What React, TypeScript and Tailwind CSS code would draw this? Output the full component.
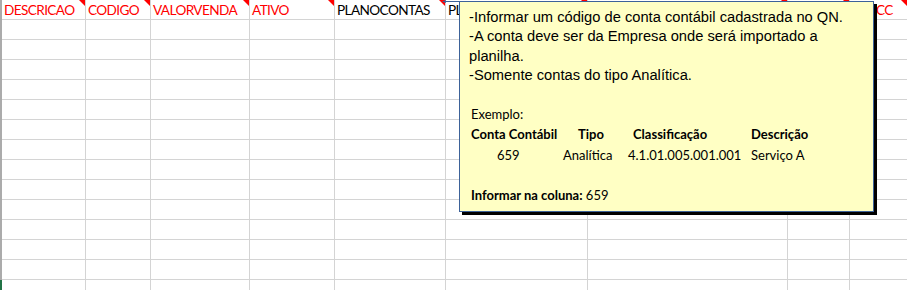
import React from 'react';

const cols = [
  { label: 'DESCRICAO', red: true },
  { label: 'CODIGO', red: true },
  { label: 'VALORVENDA', red: true },
  { label: 'ATIVO', red: true },
  { label: 'PLANOCONTAS', red: false },
  { label: 'PL', red: false },
  { label: '', red: true },
  { label: '', red: true },
  { label: 'CC', red: true },
];

const colWidth = ['w-[84px]', 'w-[65px]', 'w-[99px]', 'w-[85px]', 'w-[111px]', 'w-[142px]', 'w-[200px]', 'w-[62px]', 'w-[58px]'];

const Triangle = () => (
  <span className="absolute right-0 top-0 h-0 w-0 border-l-[6px] border-t-[6px] border-l-transparent border-t-[#ff0000]" />
);

const HeaderCell = ({ i }: { i: number }) => {
  const c = cols[i];
  return (
    <div className={`relative h-[20px] shrink-0 border-b border-r border-[#d4d4d4] ${colWidth[i]}`}>
      <span
        className={`block whitespace-nowrap pt-[1px] text-[13.6px] leading-[18px] tracking-[-0.6px] ${c.red ? 'text-[#ff0000]' : 'text-black'} ${i === 8 ? 'pl-[26px]' : 'pl-[2px]'}`}
      >
        {c.label}
      </span>
      <Triangle />
    </div>
  );
};

const Row = () => (
  <div className="flex">
    {colWidth.map((w, i) => (
      <div key={i} className={`h-[20px] shrink-0 border-b border-r border-[#d4d4d4] ${w}`} />
    ))}
  </div>
);

const Comment = () => (
  <div className="absolute left-[459px] top-[1px] h-[211px] w-[415px] border border-[#3d6299] bg-[#ffffc4] pl-[9px] pt-[6px] shadow-[3px_3px_0_#000]">
    <div className="font-['Liberation_Sans',Arial,sans-serif] text-[14.7px] leading-[19.3px] text-black">
      <p>-Informar um código de conta contábil cadastrada no QN.</p>
      <p>-A conta deve ser da Empresa onde será importado a</p>
      <p>planilha.</p>
      <p>-Somente contas do tipo Analítica.</p>
    </div>
    <div className="mt-[19px] font-['Lato',Calibri,sans-serif] text-[13px] leading-[20.3px] text-black">
      <p className="pl-[2px]">Exemplo:</p>
      <div className="flex pl-[2px] font-bold">
        <span className="w-[107px]">Conta Contábil</span>
        <span className="w-[55px]">Tipo</span>
        <span className="w-[118px]">Classificação</span>
        <span>Descrição</span>
      </div>
      <div className="flex">
        <span className="w-[94px] pl-[28px]">659</span>
        <span className="w-[65px]">Analítica</span>
        <span className="w-[123px]">4.1.01.005.001.001</span>
        <span>Serviço A</span>
      </div>
      <p className="mt-[20px] pl-[2px]">
        <span className="font-bold">Informar na coluna:</span> 659
      </p>
    </div>
  </div>
);

export default function App() {
  return (
    <div className="relative h-[290px] w-[907px] overflow-hidden bg-white font-['Lato',Calibri,sans-serif]">
      <div className="flex border-l-2 border-[#ababab]">
        <div className="flex flex-col">
          <div className="flex">
            {cols.map((_, i) => (
              <HeaderCell key={i} i={i} />
            ))}
          </div>
          {Array.from({ length: 14 }).map((_, r) => (
            <Row key={r} />
          ))}
        </div>
      </div>
      <div className="absolute bottom-0 left-0 h-[10px] w-[2px] bg-[#217346]" />
      <svg className="absolute left-[442px] top-0" width="18" height="5" viewBox="0 0 18 5">
        <line x1="1" y1="1.5" x2="17" y2="1.5" stroke="#3d6299" strokeWidth="1" />
        <path d="M0 1.5 L4 0 L4 3 Z" fill="#3d6299" />
      </svg>
      <Comment />
    </div>
  );
}
